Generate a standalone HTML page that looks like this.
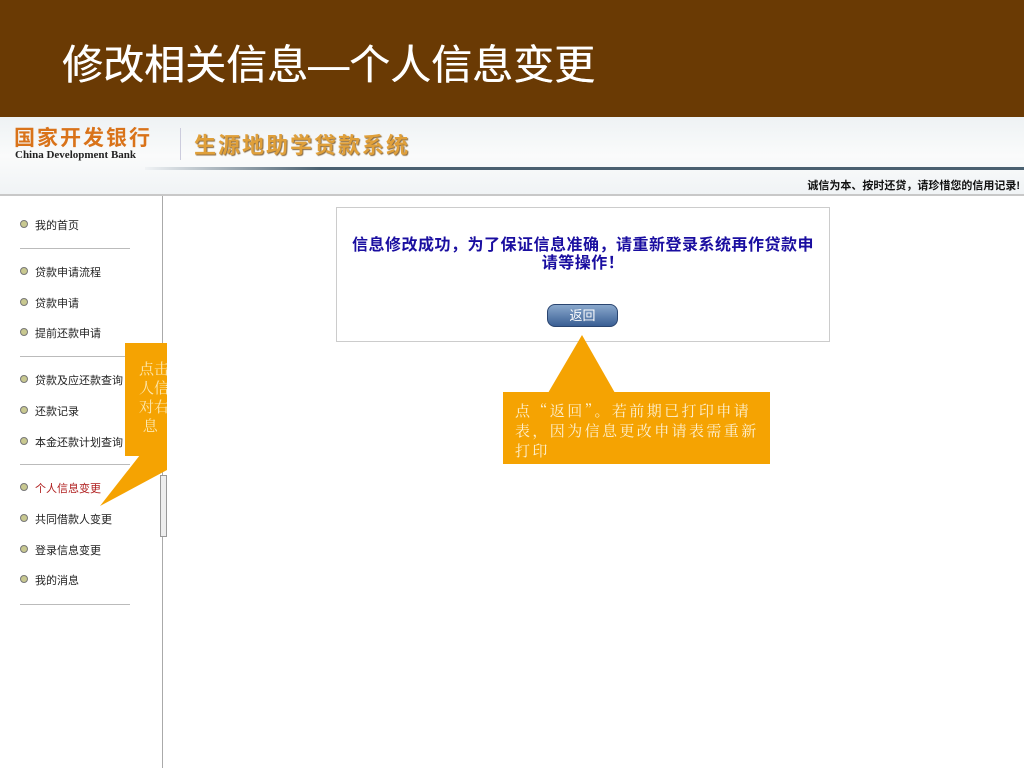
<!DOCTYPE html>
<html><head><meta charset="utf-8"><style>
*{margin:0;padding:0;box-sizing:border-box}
body{width:1024px;height:768px;position:relative;overflow:hidden;background:#fff;font-family:"Liberation Sans","Noto Sans CJK SC",sans-serif}
.top{position:absolute;left:0;top:0;width:1024px;height:117px;background:#6a3a04}
.top h1{position:absolute;left:62px;top:31px;color:#fff;font-size:41px;font-weight:normal;font-family:"Liberation Sans","Noto Sans CJK SC",sans-serif;text-shadow:0.5px 0 0 #fff}
.hdr{position:absolute;left:0;top:117px;width:1024px;height:78px;background:linear-gradient(#eef2f4,#fafbfb 50%,#f0f3f5)}
.logo1{position:absolute;left:14px;top:122px;font-size:21px;font-weight:bold;color:#d9731a;letter-spacing:2px}
.logo2{position:absolute;left:15px;top:149px;font-size:11px;font-weight:bold;font-family:"Liberation Serif",serif;color:#222}
.sys{position:absolute;left:194px;top:128px;font-size:22px;font-weight:bold;color:#e0a03a;text-shadow:1px 1px 1px #8a6a40;letter-spacing:2px}
.vsep{position:absolute;left:180px;top:128px;width:1px;height:32px;background:#ccd}
.bar{position:absolute;left:145px;top:167px;width:879px;height:3px;background:linear-gradient(90deg,#f0f3f5,#4a6070 20%,#4a6070)}
.slogan{position:absolute;right:4px;top:177px;font-size:11px;font-weight:bold;color:#111}
.hline{position:absolute;left:0;top:194px;width:1024px;height:2px;background:#c8c8c8}
.side{position:absolute;left:162px;top:196px;width:1px;height:572px;background:#aaa}
.it{position:absolute;left:20px;font-size:11px;color:#222}
.it:before{content:"";display:inline-block;width:6px;height:6px;border-radius:50%;border:1px solid #777;background:#c8c890;margin-right:7px;vertical-align:1px}
.sep{position:absolute;left:20px;width:110px;height:1px;background:#bbb}
.box{position:absolute;left:336px;top:207px;width:494px;height:135px;border:1px solid #ccc}
.msg{position:absolute;left:0;top:29px;width:100%;text-align:center;font-size:16px;letter-spacing:0.5px;font-weight:bold;color:#1a0ea0;line-height:18px;white-space:nowrap}
.btn{position:absolute;left:210px;top:96px;width:71px;height:23px;border-radius:8px;background:linear-gradient(#8aa8cc,#3a5f94);color:#fff;font-size:13px;text-align:center;line-height:22px;border:1px solid #2a4570}
.c1{position:absolute;left:125px;top:343px;width:42px;height:113px;background:#f5a302;color:#fde8b0;font-size:15px;line-height:19px;overflow:hidden;padding:18px 0 0 14px;white-space:nowrap;font-family:"Liberation Serif","Noto Serif CJK SC",serif}
.c2{position:absolute;left:503px;top:392px;width:267px;height:72px;background:#f5a302;color:#fdf0d0;font-size:15px;letter-spacing:2.4px;line-height:20px;padding:9px 0 0 12px;white-space:nowrap;font-family:"Noto Serif CJK SC",serif}
</style></head><body>
<div class="top"><h1>修改相关信息—个人信息变更</h1></div>
<div class="hdr"></div>
<div class="logo1">国家开发银行</div>
<div class="logo2">China Development Bank</div>
<div class="vsep"></div>
<div class="sys">生源地助学贷款系统</div>
<div class="bar"></div>
<div class="slogan">诚信为本、按时还贷，请珍惜您的信用记录!</div>
<div class="hline"></div>
<div class="side"></div>
<div style="position:absolute;left:160px;top:475px;width:7px;height:62px;border:1px solid #999;background:#eee"></div>
<div class="it" style="top:217px">我的首页</div>
<div class="sep" style="top:248px"></div>
<div class="it" style="top:264px">贷款申请流程</div>
<div class="it" style="top:295px">贷款申请</div>
<div class="it" style="top:325px">提前还款申请</div>
<div class="sep" style="top:356px"></div>
<div class="it" style="top:372px">贷款及应还款查询</div>
<div class="it" style="top:403px">还款记录</div>
<div class="it" style="top:434px">本金还款计划查询</div>
<div class="sep" style="top:464px"></div>
<div class="it" style="top:480px;color:#b02020">个人信息变更</div>
<div class="it" style="top:511px">共同借款人变更</div>
<div class="it" style="top:542px">登录信息变更</div>
<div class="it" style="top:572px">我的消息</div>
<div class="sep" style="top:604px"></div>
<div class="box"><div class="msg">信息修改成功，为了保证信息准确，请重新登录系统再作贷款申<br>请等操作！</div><div class="btn">返回</div></div>
<svg style="position:absolute;left:0;top:0" width="1024" height="768">
<polygon points="140,455 167,455 167,470 100,506" fill="#f5a302"/>
<polygon points="548,393 615,393 582,335" fill="#f5a302"/>
</svg>
<div class="c1">点击<br>人信<br>对右<br>&nbsp;息</div>
<div class="c2">点“返回”。若前期已打印申请<br>表，因为信息更改申请表需重新<br>打印</div>
</body></html>
